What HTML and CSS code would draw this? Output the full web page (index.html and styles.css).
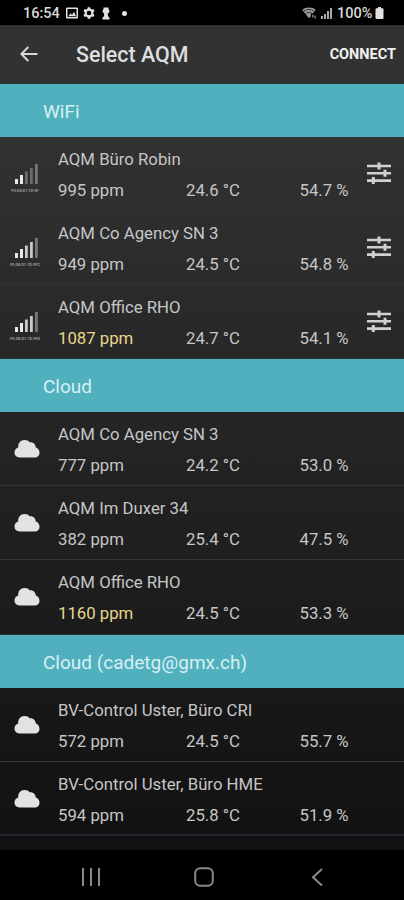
FILE: index.html
```html
<!DOCTYPE html>
<html lang="en">
<head>
    <meta charset="UTF-8">
    <meta name="viewport" content="width=device-width, initial-scale=1.0">
    <title>Select AQM</title>
    <link rel="stylesheet" href="styles.css">
</head>
<body>
    <!-- Shared icons -->
    <svg class="sprite" aria-hidden="true">
        <symbol id="icon-cloud" viewBox="0 0 26 19">
            <path d="M5.500 18.500C2.500 18.500.5 16.300.5 13.600C.5 11 2 9.200 4.200 8.500C3.800 4.500 6.500 1 10.500 1C13 1 14.500 1.800 15.600 3.300C19 2.800 21.600 5 21.800 8.600C24.200 9.400 25.500 11.300 25.500 13.700C25.500 16.500 23.500 18.500 20.500 18.500Z"/>
        </symbol>
        <symbol id="icon-sliders" viewBox="0 0 24 22">
            <path d="M0 2.700h24v2.600H0zM0 10h24v2.600H0zM0 17.300h24v2.600H0z"/>
            <path d="M10.500.5h3v7h-3zM16.500 7.800h3v7h-3zM4.800 15.100h3v6.900h-3z"/>
        </symbol>
        <symbol id="icon-signal" viewBox="0 0 23 20">
            <path class="on" d="M0 15h3v5H0zM5 11h3v9H5z"/>
            <path class="mid" d="M10 7.500h2.800V20H10zM15 4h2.800v16H15z"/>
            <path class="off" d="M20 0h2.800v20H20z"/>
        </symbol>
    </svg>

    <div class="status-bar">
        <span class="clock">16:54</span>
        <svg class="status-photo" viewBox="0 0 12 12"><path fill-rule="evenodd" d="M1 .5h10q1 0 1 1v9q0 1-1 1H1q-1 0-1-1v-9q0-1 1-1zM1.500 2v8h9V2z"/><path d="M2.300 9.300l2.200-3 1.500 1.600L8 4.800l2 4.500z"/></svg>
        <svg class="status-gear" viewBox="0 0 12 12"><path fill-rule="evenodd" d="M4.800.2h2.400l.4 1.600 1.100.6L10.300 2l1.200 2.100-1.200 1.200v1.400l1.200 1.200-1.200 2.100-1.600-.4-1.100.6-.4 1.600H4.800l-.4-1.600-1.100-.6-1.600.4L.5 7.900l1.200-1.200V5.300L.5 4.100 1.700 2l1.600.4 1.100-.6zM6 3.700a2.300 2.300 0 1 0 0 4.600 2.300 2.300 0 0 0 0-4.600z"/></svg>
        <svg class="status-pawn" viewBox="0 0 8 13"><path d="M1.500.5h5v1.800L7.300 3v2.200L5.900 6.500v2.700l1.600 1.300v2h-7v-2l1.600-1.300V6.500L.7 5.200V3l.8-.7z"/></svg>
        <span class="status-dot"></span>
        <svg class="status-wifi" viewBox="0 0 14 12"><path d="M7 .5c2.600 0 4.900.8 6.700 2.400L11 6.300H8.800v3L7 11.300.3 2.900C2.100 1.300 4.400.5 7 .5z"/><path class="wave" d="M1.800 4.300q5.200-3.800 10.400 0M3.800 6.500q3.200-2 5.500-.8"/><path d="M10.200 7.500h1.200v3h-1.200zM12.500 8.500h1.200v3h-1.200z"/></svg>
        <svg class="status-signal" viewBox="0 0 11 11"><path d="M0 8h2v3H0zM3 6h2v5H3zM6 3h2v8H6zM9 0h2v11H9z"/></svg>
        <span class="battery-level">100%</span>
        <svg class="status-battery" viewBox="0 0 8 12"><path d="M2.500 0h3v1.300H7q1 0 1 1V11q0 1-1 1H1q-1 0-1-1V2.300q0-1 1-1h1.500z"/></svg>
    </div>

    <header class="app-bar">
        <svg class="back" viewBox="0 0 18 16"><path d="M17.500 8H1.500M8.300 1L1.300 8l7 7"/></svg>
        <h1>Select AQM</h1>
        <button class="connect">CONNECT</button>
    </header>

    <main class="device-list">
        <h2>WiFi</h2>
        <div class="device">
            <div class="source"><svg class="signal weak"><use href="#icon-signal"/></svg><small>F0:08:D1:7E:9F</small></div>
            <div class="name">AQM Büro Robin</div>
            <span class="co2">995 ppm</span><span class="temp">24.6 °C</span><span class="humidity">54.7 %</span>
            <svg class="settings"><use href="#icon-sliders"/></svg>
        </div>
        <div class="device">
            <div class="source"><svg class="signal"><use href="#icon-signal"/></svg><small>F0:08:D1:7E:9FC</small></div>
            <div class="name">AQM Co Agency SN 3</div>
            <span class="co2">949 ppm</span><span class="temp">24.5 °C</span><span class="humidity">54.8 %</span>
            <svg class="settings"><use href="#icon-sliders"/></svg>
        </div>
        <div class="device">
            <div class="source"><svg class="signal"><use href="#icon-signal"/></svg><small>F0:08:D1:7E:9FE</small></div>
            <div class="name">AQM Office RHO</div>
            <span class="co2 warn">1087 ppm</span><span class="temp">24.7 °C</span><span class="humidity">54.1 %</span>
            <svg class="settings"><use href="#icon-sliders"/></svg>
        </div>

        <h2>Cloud</h2>
        <div class="device">
            <div class="source"><svg class="cloud"><use href="#icon-cloud"/></svg></div>
            <div class="name">AQM Co Agency SN 3</div>
            <span class="co2">777 ppm</span><span class="temp">24.2 °C</span><span class="humidity">53.0 %</span>
        </div>
        <div class="device">
            <div class="source"><svg class="cloud"><use href="#icon-cloud"/></svg></div>
            <div class="name">AQM Im Duxer 34</div>
            <span class="co2">382 ppm</span><span class="temp">25.4 °C</span><span class="humidity">47.5 %</span>
        </div>
        <div class="device">
            <div class="source"><svg class="cloud"><use href="#icon-cloud"/></svg></div>
            <div class="name">AQM Office RHO</div>
            <span class="co2 warn">1160 ppm</span><span class="temp">24.5 °C</span><span class="humidity">53.3 %</span>
        </div>

        <h2>Cloud (cadetg@gmx.ch)</h2>
        <div class="device">
            <div class="source"><svg class="cloud"><use href="#icon-cloud"/></svg></div>
            <div class="name">BV-Control Uster, Büro CRI</div>
            <span class="co2">572 ppm</span><span class="temp">24.5 °C</span><span class="humidity">55.7 %</span>
        </div>
        <div class="device">
            <div class="source"><svg class="cloud"><use href="#icon-cloud"/></svg></div>
            <div class="name">BV-Control Uster, Büro HME</div>
            <span class="co2">594 ppm</span><span class="temp">25.8 °C</span><span class="humidity">51.9 %</span>
        </div>
    </main>

    <nav class="nav-bar">
        <svg viewBox="0 0 20 20"><path d="M2 1v18M10 1v18M18 1v18"/></svg>
        <svg viewBox="0 0 20 20"><rect x="1.200" y="1.200" width="17.600" height="17.600" rx="5"/></svg>
        <svg viewBox="0 0 20 20"><path d="M14 2L5 10.200l9 8.300"/></svg>
    </nav>
</body>
</html>
```
FILE: styles.css
```css
* {
    margin: 0;
    padding: 0;
    box-sizing: border-box;
}

body {
    height: 900px;
    display: flex;
    flex-direction: column;
    overflow: hidden;
    background-color: #000;
    color: #c6c6c6;
    font-family: Roboto, sans-serif;
}

svg {
    display: block;
    flex: none;
}

.sprite {
    position: absolute;
    width: 0;
    height: 0;
}

/* Status bar */
.status-bar {
    height: 25px;
    flex: none;
    display: flex;
    align-items: center;
    padding: 1px 20px 0 23px;
    fill: #e2e2e2;
    color: #d8d8d8;
    font-size: 14.5px;
    font-weight: 500;
}

.clock {
    width: 43px;
}

.status-photo {
    width: 12px;
    height: 12px;
}

.status-gear {
    width: 12px;
    height: 12px;
    margin-left: 5px;
}

.status-pawn {
    width: 8px;
    height: 13px;
    margin-left: 7px;
}

.status-dot {
    width: 5px;
    height: 5px;
    margin-left: 12px;
    border-radius: 50%;
    background-color: #e2e2e2;
}

.status-wifi {
    width: 14px;
    height: 12px;
    margin-left: auto;
    fill: #999;
}

.status-wifi .wave {
    fill: none;
    stroke: #222;
    stroke-width: 0.8;
}

.status-signal {
    width: 11px;
    height: 11px;
    margin: 0 5px;
    fill: #aaa;
}

.battery-level {
    width: 37px;
    white-space: nowrap;
}

.status-battery {
    width: 9px;
    height: 12px;
    margin-left: 1px;
}

/* App bar */
.app-bar {
    height: 58.5px;
    flex: none;
    display: flex;
    align-items: center;
    padding: 2px 8px 0 20px;
    background-color: #323232;
    border-bottom: 1px solid #293032;
}

.back {
    width: 18px;
    height: 16px;
    margin-bottom: 2px;
    fill: none;
    stroke: #d8d8d8;
    stroke-width: 2;
}

.app-bar h1 {
    margin-left: 38px;
    color: #dedede;
    font-size: 21.4px;
    font-weight: 500;
}

.connect {
    margin-left: auto;
    border: none;
    background: none;
    color: #f0f0f0;
    font-family: inherit;
    font-size: 14.5px;
    font-weight: 700;
}

/* Device list */
.device-list {
    height: 766.5px;
    flex: none;
    background: linear-gradient(#343434, #111);
}

.device-list h2 {
    height: 53px;
    padding-left: 43px;
    background-color: #50b0be;
    color: #d9eff2;
    font-size: 19px;
    font-weight: 400;
    line-height: 55px;
}

.device {
    height: 74.2px;
    display: grid;
    grid-template-columns: 58px 128px 113.5px 67px 24px;
    grid-template-rows: 31px 31px;
    align-items: center;
    padding-top: 6.5px;
    border-bottom: 1px solid #303638;
    font-size: 16.75px;
}

.device:last-child {
    border-bottom: 2px solid #24242f;
}

.source {
    grid-row: 1 / 3;
    width: 50px;
    display: flex;
    flex-direction: column;
    align-items: center;
}

.source small {
    margin-top: 4px;
    color: #999;
    font-size: 4px;
    font-weight: 700;
    line-height: 6px;
    white-space: nowrap;
}

.signal {
    width: 23px;
    height: 20px;
    margin: 10px 0 0 3px;
    --mid: #c8c8c8;
}

.signal.weak {
    --mid: #6c6c6c;
}

.on {
    fill: #e8e8e8;
}

.mid {
    fill: var(--mid);
}

.off {
    fill: #777;
}

.cloud {
    width: 26px;
    height: 19px;
    margin: 0 0 2px 3px;
    fill: #e2e2e2;
}

.name {
    grid-column: 2 / 5;
}

.co2 {
    grid-column: 2;
}

.warn {
    color: #e8d78c;
}

.settings {
    grid-area: 1 / 5 / 3 / 6;
    width: 24px;
    height: 22px;
    margin-bottom: 2px;
    fill: #d0d0d0;
}

/* Navigation bar */
.nav-bar {
    height: 50px;
    display: flex;
    align-items: center;
    gap: 93.5px;
    padding: 3px 0 0 80.5px;
}

.nav-bar svg {
    width: 20px;
    height: 20px;
    fill: none;
    stroke: #8a8a8a;
    stroke-width: 2;
}
```
